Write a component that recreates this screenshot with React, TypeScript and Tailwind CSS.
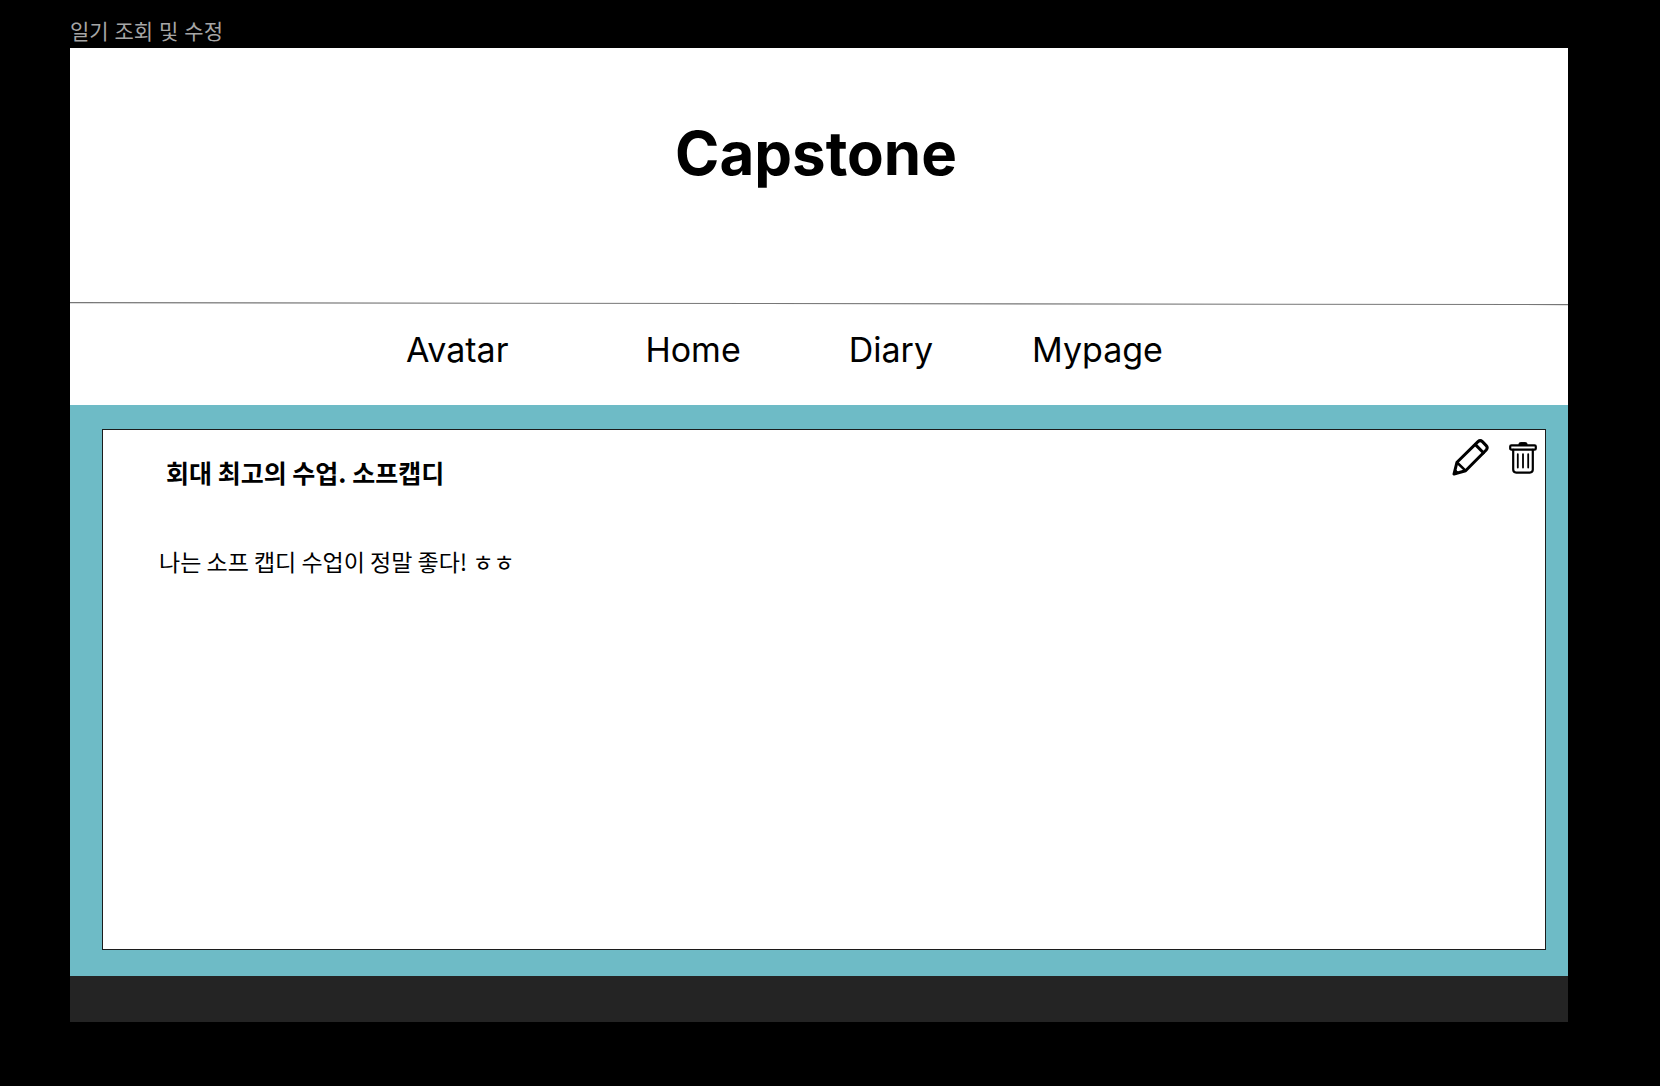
function PencilIcon() {
  return (
    <svg width="38" height="38" viewBox="0 0 38 38" fill="none" stroke="#000" strokeWidth="3" strokeLinejoin="round" strokeLinecap="round" aria-hidden="true">
      <path d="M2 36 L5 24.2 L26 3.6 Q28.2 1.6 30.4 3.6 L34.2 7.6 Q36.2 9.8 34.2 12 L13.6 32.8 Z" />
      <path d="M23.4 6.6 L31.4 14.8" />
      <path d="M5.6 25 L13 32.2" strokeWidth="2.5" />
      <path d="M2 36 L3.2 31.4 L6.6 34.8 Z" fill="#000" strokeWidth="1" />
    </svg>
  );
}

function TrashIcon() {
  return (
    <svg width="28" height="34" viewBox="0 0 28 34" fill="none" stroke="#000" strokeWidth="2.2" strokeLinejoin="round" strokeLinecap="round" aria-hidden="true">
      <path d="M10 5 V4 Q10 2.6 11.6 2.6 H16.4 Q18 2.6 18 4 V5 Z" fill="#000" strokeWidth="1" />
      <rect x="1.2" y="5.4" width="25.6" height="4.2" rx="1.2" />
      <path d="M4.2 9.8 V29.6 Q4.2 32.6 7.2 32.6 H20.8 Q23.8 32.6 23.8 29.6 V9.8" />
      <path d="M8.8 14.2 V27.6 M14 14.2 V27.6 M19.2 14.2 V27.6" strokeWidth="1.8" />
    </svg>
  );
}

export default function App() {
  return (
    <div className="min-h-screen bg-black pt-4 pr-[92px] pb-16 pl-[70px] font-['Inter','Noto_Sans_CJK_KR',sans-serif] text-black">
      <p className="h-8 text-[21px] leading-8 text-[#a6a6a6]">일기 조회 및 수정</p>

      <div className="bg-[#242424] pb-[46px]">
        <header className="bg-white">
          <h1 className="flex h-[254px] items-start justify-center pt-[69px] pr-1.5 text-[60px] leading-[72px] font-bold">
            Capstone
          </h1>
          <svg className="block h-1 w-full" viewBox="0 0 1498 4" preserveAspectRatio="none" aria-hidden="true">
            <line x1="0" y1="0.6" x2="1498" y2="2.6" stroke="#777" strokeWidth="1.1" />
          </svg>
          <nav className="flex h-[99px] items-start justify-center pt-[22px] pr-[69px] text-[34px] leading-[44px]">
            <a href="#avatar" className="mr-[137px]">Avatar</a>
            <a href="#home" className="mr-[108px]">Home</a>
            <a href="#diary" className="mr-[99px]">Diary</a>
            <a href="#mypage">Mypage</a>
          </nav>
        </header>

        <main className="bg-[#6ebbc6] pt-6 pr-[22px] pb-[26px] pl-8">
          <article className="flex min-h-[521px] items-start justify-between border border-[#1c1c1c] bg-white pr-2">
            <div className="pt-[22px] pl-14 font-['Noto_Sans_CJK_KR',sans-serif]">
              <h2 className="pl-[7px] text-[25px] leading-10 font-bold">회대 최고의 수업. 소프캡디</h2>
              <p className="mt-[51px] text-[23px] leading-9">나는 소프 캡디 수업이 정말 좋다! ㅎㅎ</p>
            </div>
            <div className="flex items-center gap-[19px] pt-2">
              <button type="button" aria-label="수정">
                <PencilIcon />
              </button>
              <button type="button" aria-label="삭제">
                <TrashIcon />
              </button>
            </div>
          </article>
        </main>
      </div>
    </div>
  );
}
